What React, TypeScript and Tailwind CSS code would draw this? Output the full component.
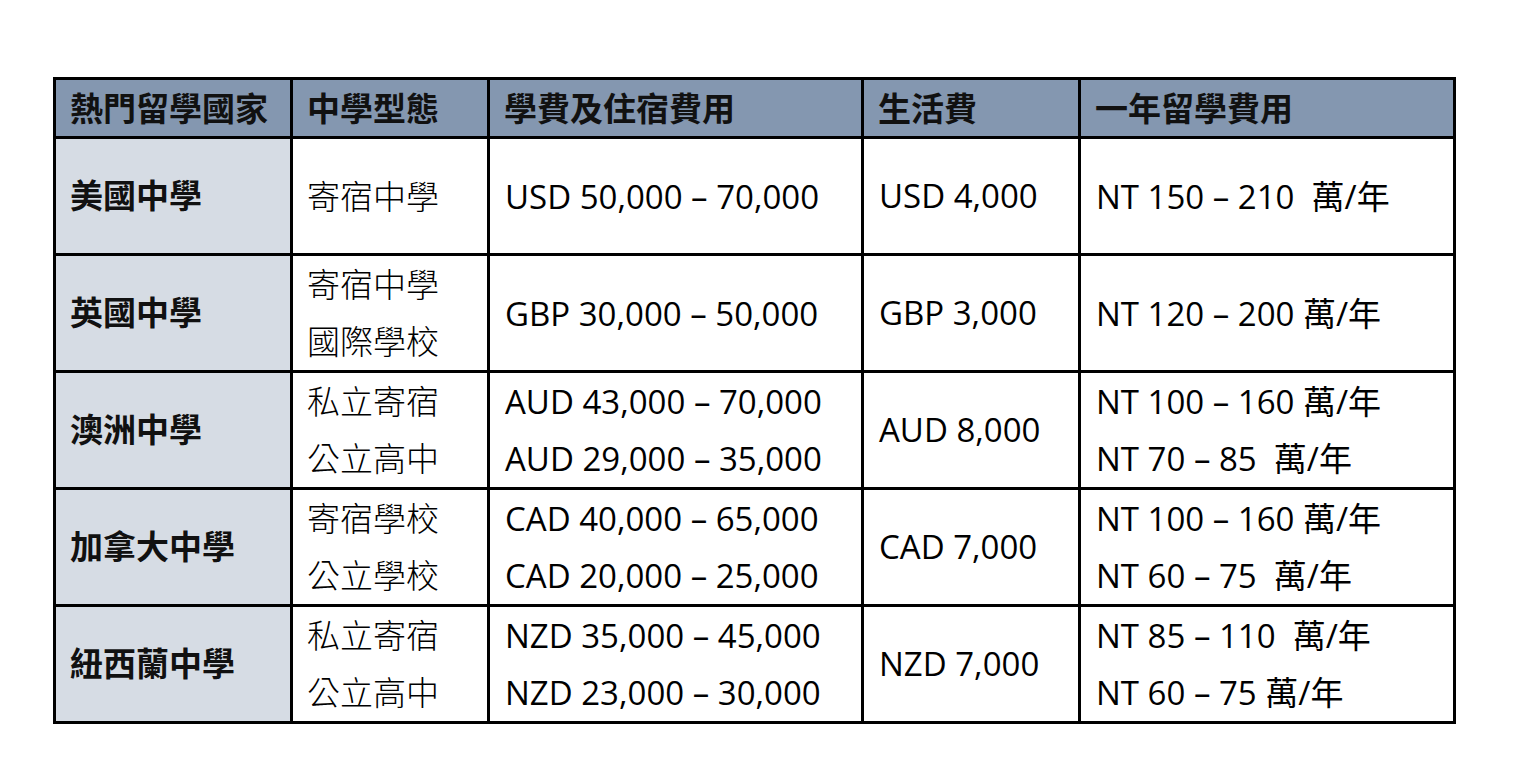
const rows: { country: string; type: string[]; tuition: string[]; living: string; total: string[] }[] = [
  { country: '美國中學', type: ['寄宿中學'], tuition: ['USD 50,000 – 70,000'], living: 'USD 4,000', total: ['NT 150 – 210  萬/年'] },
  { country: '英國中學', type: ['寄宿中學', '國際學校'], tuition: ['GBP 30,000 – 50,000'], living: 'GBP 3,000', total: ['NT 120 – 200 萬/年'] },
  { country: '澳洲中學', type: ['私立寄宿', '公立高中'], tuition: ['AUD 43,000 – 70,000', 'AUD 29,000 – 35,000'], living: 'AUD 8,000', total: ['NT 100 – 160 萬/年', 'NT 70 – 85  萬/年'] },
  { country: '加拿大中學', type: ['寄宿學校', '公立學校'], tuition: ['CAD 40,000 – 65,000', 'CAD 20,000 – 25,000'], living: 'CAD 7,000', total: ['NT 100 – 160 萬/年', 'NT 60 – 75  萬/年'] },
  { country: '紐西蘭中學', type: ['私立寄宿', '公立高中'], tuition: ['NZD 35,000 – 45,000', 'NZD 23,000 – 30,000'], living: 'NZD 7,000', total: ['NT 85 – 110  萬/年', 'NT 60 – 75 萬/年'] },
];

const font = { fontFamily: '"Open Sans", "Noto Sans CJK TC", sans-serif' };

function Lines({ items }: { items: string[] }) {
  return (
    <div className="flex flex-col">
      {items.map((t, i) => (
        <div key={i} className="leading-[57px] whitespace-pre">{t}</div>
      ))}
    </div>
  );
}

export default function App() {
  return (
    <div className="w-[1518px] h-[768px] bg-white pt-[77px] pl-[53px]" style={font}>
      <table className="border-collapse text-[33px] text-black table-fixed w-[1400px]">
        <colgroup>
          <col className="w-[237px]" />
          <col className="w-[197px]" />
          <col className="w-[374px]" />
          <col className="w-[217px]" />
          <col className="w-[375px]" />
        </colgroup>
        <thead>
          <tr className="bg-[#8497b0] h-[59px]">
            {['熱門留學國家', '中學型態', '學費及住宿費用', '生活費', '一年留學費用'].map((h) => (
              <th key={h} className="border-[3px] border-black text-left font-bold px-[14px] py-0 leading-[53px] text-[#111]">{h}</th>
            ))}
          </tr>
        </thead>
        <tbody>
          {rows.map((r) => (
            <tr key={r.country} className="h-[117px]">
              <td className="border-[3px] border-black bg-[#d6dce4] px-[14px] font-bold text-[#111]">{r.country}</td>
              <td className="border-[3px] border-black px-[14px] font-light"><Lines items={r.type} /></td>
              <td className="border-[3px] border-black px-[15px]"><Lines items={r.tuition} /></td>
              <td className="border-[3px] border-black px-[15px]">{r.living}</td>
              <td className="border-[3px] border-black px-[15px]"><Lines items={r.total} /></td>
            </tr>
          ))}
        </tbody>
      </table>
    </div>
  );
}
